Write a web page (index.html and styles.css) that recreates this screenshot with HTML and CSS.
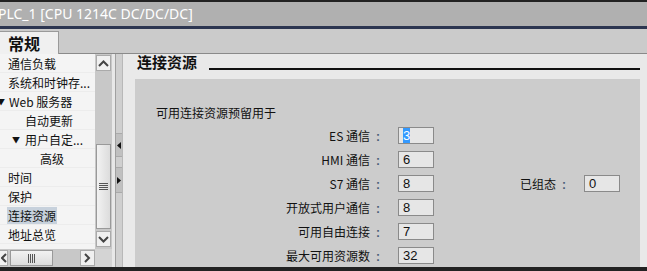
FILE: index.html
```html
<!DOCTYPE html>
<html lang="zh">
<head>
    <meta charset="UTF-8">
    <title>PLC_1 属性</title>
    <link rel="stylesheet" href="styles.css">
</head>
<body>
    <div class="topline"></div>
    <div class="titlebar">PLC_1 [CPU 1214C DC/DC/DC]</div>
    <div class="accent"></div>
    <div class="tabs">
        <div class="tab">常规</div>
    </div>

    <div class="body">
        <div class="sidebar">
            <div class="navwrap">
                <ul class="nav">
                    <li class="lvl0">通信负载</li>
                    <li class="lvl0">系统和时钟存...</li>
                    <li class="lvl0 open"><span class="tri">▼</span>Web 服务器</li>
                    <li class="lvl1">自动更新</li>
                    <li class="lvl1 open"><span class="tri">▼</span>用户自定...</li>
                    <li class="lvl2">高级</li>
                    <li class="lvl0">时间</li>
                    <li class="lvl0">保护</li>
                    <li class="lvl0"><span class="sel">连接资源</span></li>
                    <li class="lvl0">地址总览</li>
                </ul>
                <div class="vscroll">
                    <div class="sbtn">
                        <svg width="11" height="7" viewBox="0 0 11 7"><path d="M1 6 L5.5 1.5 L10 6" fill="none" stroke="#444" stroke-width="2"/></svg>
                    </div>
                    <div class="vtrack"></div>
                    <div class="vthumb">
                        <svg width="9" height="7" viewBox="0 0 9 7"><path d="M0 0.5H9M0 2.5H9M0 4.5H9M0 6.5H9" stroke="#555" stroke-width="1"/></svg>
                    </div>
                    <div class="sbtn">
                        <svg width="11" height="7" viewBox="0 0 11 7"><path d="M1 1 L5.5 5.5 L10 1" fill="none" stroke="#444" stroke-width="2"/></svg>
                    </div>
                </div>
            </div>
            <div class="hscroll">
                <div class="hbtn left">
                    <svg width="6" height="10" viewBox="0 0 6 10"><path d="M5 1 L1 5 L5 9" fill="none" stroke="#444" stroke-width="2"/></svg>
                </div>
                <div class="hthumb">
                    <svg width="7" height="9" viewBox="0 0 7 9"><path d="M0.5 0V9M2.5 0V9M4.5 0V9M6.5 0V9" stroke="#555" stroke-width="1"/></svg>
                </div>
                <div class="htrack"></div>
                <div class="hbtn right">
                    <svg width="7" height="10" viewBox="0 0 7 10"><path d="M1 1 L5 5 L1 9" fill="none" stroke="#444" stroke-width="2"/></svg>
                </div>
                <div class="corner"></div>
            </div>
        </div>

        <div class="splitter">
            <div class="sarrow up">
                <svg width="4" height="7" viewBox="0 0 4 7"><path d="M4 0 L0 3.5 L4 7Z" fill="#111"/></svg>
            </div>
            <div class="sarrow down">
                <svg width="4" height="7" viewBox="0 0 4 7"><path d="M0 0 L4 3.5 L0 7Z" fill="#111"/></svg>
            </div>
        </div>

        <div class="main">
            <div class="section-head">
                <span class="section-title">连接资源</span>
                <span class="section-line"></span>
            </div>
            <div class="panel">
                <div class="panel-title">可用连接资源预留用于</div>
                <div class="form">
                    <div class="row">
                        <span class="lbl">ES 通信<span class="colon">:</span></span>
                        <span class="field"><span class="hl">3</span></span>
                    </div>
                    <div class="row">
                        <span class="lbl">HMI 通信<span class="colon">:</span></span>
                        <span class="field">6</span>
                    </div>
                    <div class="row">
                        <span class="lbl">S7 通信<span class="colon">:</span></span>
                        <span class="field">8</span>
                        <span class="lbl2">已组态<span class="colon">:</span></span>
                        <span class="field">0</span>
                    </div>
                    <div class="row">
                        <span class="lbl">开放式用户通信<span class="colon">:</span></span>
                        <span class="field">8</span>
                    </div>
                    <div class="row">
                        <span class="lbl">可用自由连接<span class="colon">:</span></span>
                        <span class="field">7</span>
                    </div>
                    <div class="row">
                        <span class="lbl">最大可用资源数<span class="colon">:</span></span>
                        <span class="field">32</span>
                    </div>
                </div>
            </div>
        </div>
    </div>

    <div class="bottomline"></div>
</body>
</html>
```

FILE: styles.css
```css
html, body {
    margin: 0;
    padding: 0;
}

body {
    width: 647px;
    height: 271px;
    overflow: hidden;
    font-family: "Noto Sans CJK SC", "Noto Sans", sans-serif;
    font-size: 12px;
    color: #111;
    background: #e8e8e8;
}

.topline {
    height: 2px;
    background: #222;
}

.titlebar {
    height: 24px;
    line-height: 24px;
    background: #b0b0b0;
    color: #fff;
    font-family: "Noto Sans", sans-serif;
    font-size: 14px;
    margin-left: -2px;
    white-space: nowrap;
}

.accent {
    height: 3px;
    background: #2c3550;
}

.tabs {
    height: 24px;
    background: #cbcbcb;
    border-bottom: 1px solid #8a8a8a;
    display: flex;
    align-items: flex-end;
}

.tab {
    width: 50px;
    height: 22px;
    margin-bottom: -1px;
    padding-left: 8px;
    background: #f0f0f0;
    border-top: 1px solid #9a9a9a;
    border-right: 1px solid #9a9a9a;
    font-size: 16px;
    font-weight: bold;
    line-height: 23px;
}

.body {
    display: flex;
    height: 213px;
}

/* left navigation */
.sidebar {
    width: 112px;
    display: flex;
    flex-direction: column;
    background: #f4f4f4;
}

.navwrap {
    display: flex;
    height: 195px;
}

.nav {
    list-style: none;
    margin: 0;
    padding: 0;
    width: 95px;
    overflow: hidden;
}

.nav li {
    height: 19px;
    line-height: 19px;
    white-space: nowrap;
    border-bottom: 1px solid #ececec;
    box-sizing: border-box;
    position: relative;
}

.nav .lvl0 { padding-left: 8px; }
.nav .lvl1 { padding-left: 25px; }
.nav .lvl2 { padding-left: 40px; }

.nav .tri {
    position: absolute;
    font-size: 8px;
    top: 0;
}

.nav .lvl0 .tri { left: -3px; }
.nav .lvl1 .tri { left: 12px; }
.nav .lvl0.open { padding-left: 9px; }

.nav .sel {
    background: #c7d1dc;
    padding: 0 1px;
    margin-left: -1px;
}

.vscroll {
    width: 17px;
    background: #c8c8c8;
    display: flex;
    flex-direction: column;
    align-items: center;
    padding-top: 1px;
}

.sbtn {
    width: 15px;
    height: 16px;
    background: #f0f0f0;
    border: 1px solid #aaa;
    box-sizing: border-box;
    display: flex;
    align-items: center;
    justify-content: center;
}

.vtrack {
    height: 73px;
}

.vthumb {
    width: 15px;
    height: 85px;
    background: linear-gradient(to right, #f2f2f2, #dcdcdc);
    border: 1px solid #999;
    box-sizing: border-box;
    display: flex;
    align-items: center;
    justify-content: center;
    margin-bottom: 2px;
}

.hscroll {
    height: 18px;
    display: flex;
    align-items: center;
    background: #c8c8c8;
}

.hbtn {
    height: 16px;
    background: #f0f0f0;
    border: 1px solid #aaa;
    box-sizing: border-box;
    display: flex;
    align-items: center;
    justify-content: center;
}

.hbtn.left {
    width: 9px;
    margin-left: -1px;
}

.hbtn.right {
    width: 15px;
}

.hthumb {
    width: 43px;
    height: 16px;
    margin-left: 2px;
    background: linear-gradient(#f2f2f2, #dcdcdc);
    border: 1px solid #999;
    box-sizing: border-box;
    display: flex;
    align-items: center;
    justify-content: center;
}

.htrack {
    width: 27px;
}

.corner {
    width: 17px;
    height: 18px;
    background: #d4d4d4;
}

/* splitter between nav and content */
.splitter {
    width: 6px;
    margin-left: 3px;
    background: #cfcfcf;
    border-left: 1px solid #a0a0a0;
    border-right: 1px solid #b8b8b8;
    display: flex;
    flex-direction: column;
    padding-top: 79px;
    gap: 10px;
}

.sarrow {
    height: 22px;
    background: #c0c0c0;
    border-top: 1px solid #aaa;
    border-bottom: 1px solid #aaa;
    display: flex;
    align-items: center;
    justify-content: center;
}

.sarrow.down {
    height: 24px;
}

/* main content */
.main {
    flex: 1;
    background: #e9e9e9;
    padding: 0 7px 0 12px;
    display: flex;
    flex-direction: column;
}

.section-head {
    display: flex;
    align-items: flex-end;
    height: 15px;
    padding-left: 2px;
}

.section-title {
    font-size: 15px;
    font-weight: bold;
    line-height: 15px;
    margin-top: 1px;
}

.section-line {
    flex: 1;
    height: 2px;
    background: #111;
    margin-left: 12px;
    margin-bottom: -1px;
}

.panel {
    flex: 1;
    margin-top: 10px;
    background: #cccccc;
    padding: 25px 0 0 21px;
}

.panel-title {
    line-height: 18px;
}

.form {
    display: flex;
    flex-direction: column;
    gap: 7px;
    margin-top: 5px;
}

.row {
    display: flex;
    align-items: center;
    height: 17px;
}

.lbl {
    width: 242px;
    text-align: right;
    white-space: nowrap;
}

.lbl2 {
    width: 150px;
    text-align: right;
    white-space: nowrap;
}

.colon {
    display: inline-block;
    width: 8px;
    margin: 0 16px 0 4px;
    text-align: center;
    color: #4a5d78;
    font-family: "Liberation Sans", sans-serif;
    font-weight: bold;
}

.field {
    width: 36px;
    height: 17px;
    background: #e6e6e6;
    border: 1px solid #8a8a8a;
    box-sizing: border-box;
    font-family: "Liberation Sans", sans-serif;
    font-size: 13px;
    line-height: 15px;
    padding-left: 4px;
}

.field .hl {
    background: #3399ff;
    color: #fff;
}

.bottomline {
    height: 4px;
    background: #222;
}
```
